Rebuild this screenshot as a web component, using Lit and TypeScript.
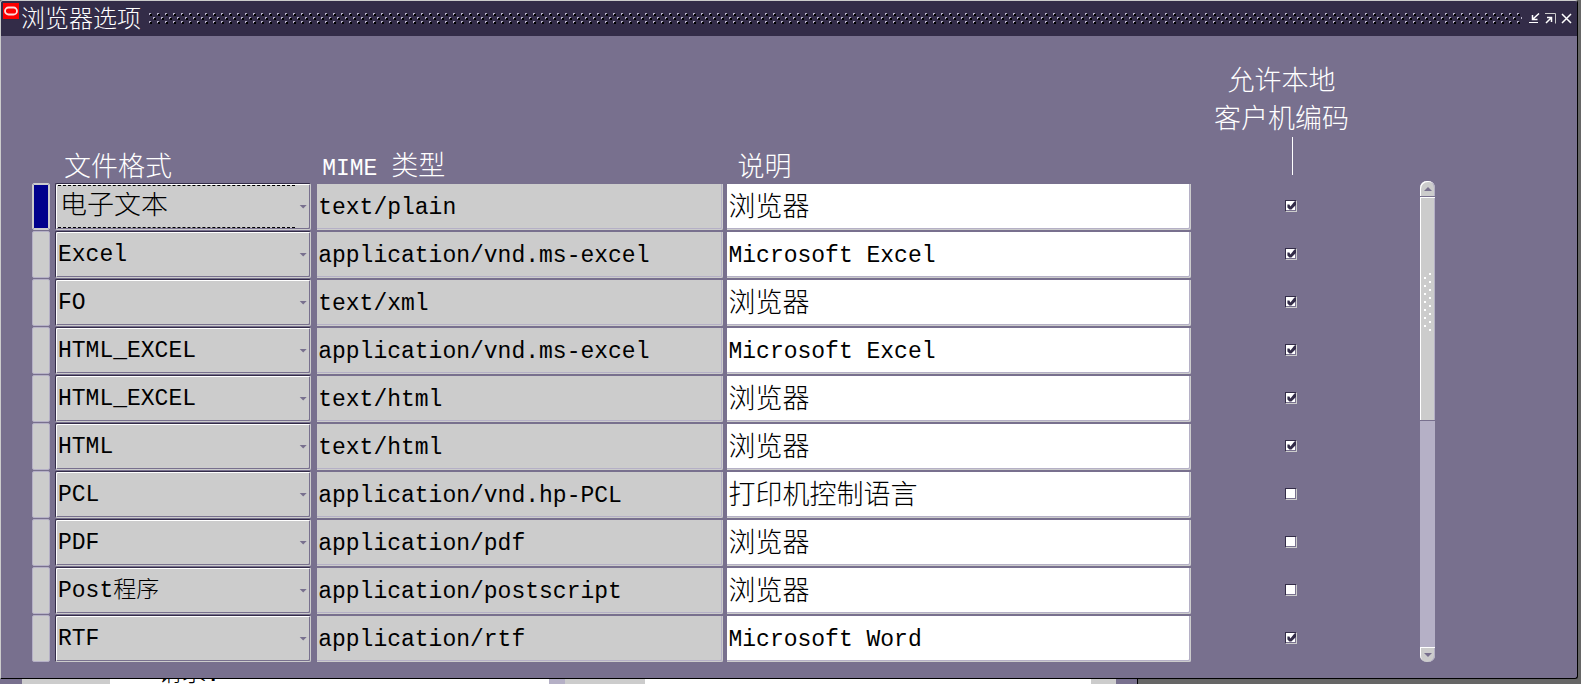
import { LitElement, html, css, svg } from "lit";
import { customElement, state } from "lit/decorators.js";
import { classMap } from "lit/directives/class-map.js";

interface Row {
  format: string;
  mime: string;
  note: string;
  local: boolean;
}

const hasHan = (s: string) => /^[\u4e00-\u9fff]/.test(s);

@customElement("app-root")
export class AppRoot extends LitElement {
  @state() private current = 0;
  @state() private rows: Row[] = [
    { format: "电子文本", mime: "text/plain", note: "浏览器", local: true },
    { format: "Excel", mime: "application/vnd.ms-excel", note: "Microsoft Excel", local: true },
    { format: "FO", mime: "text/xml", note: "浏览器", local: true },
    { format: "HTML_EXCEL", mime: "application/vnd.ms-excel", note: "Microsoft Excel", local: true },
    { format: "HTML_EXCEL", mime: "text/html", note: "浏览器", local: true },
    { format: "HTML", mime: "text/html", note: "浏览器", local: true },
    { format: "PCL", mime: "application/vnd.hp-PCL", note: "打印机控制语言", local: false },
    { format: "PDF", mime: "application/pdf", note: "浏览器", local: false },
    { format: "Post程序", mime: "application/postscript", note: "浏览器", local: false },
    { format: "RTF", mime: "application/rtf", note: "Microsoft Word", local: true },
  ];

  static styles = css`
    :host {
      display: flex;
      flex-direction: column;
      min-height: 100vh;
      background: #666;
      font-family: "Liberation Mono", "Noto Sans CJK SC", monospace;
      font-size: 23px;
      font-weight: 300;
      color: #000;
    }
    * { box-sizing: border-box; }
    button, input, select { font: inherit; color: inherit; margin: 0; padding: 0; border: 0; border-radius: 0; }
    svg { display: block; }

    .window {
      margin-right: 3px;
      background: #78708e;
      border: 1px solid #ccc;
      border-right-color: #000;
      border-bottom-color: #000;
      border-radius: 3px 3px 3px 0;
      overflow: hidden;
    }
    .titlebar {
      display: flex;
      height: 35px;
      padding: 0 5px 0 2px;
      background: #332c48;
      color: #fff;
    }
    .logo { margin-top: 2px; width: 16px; height: 16px; }
    .title { margin: 2px 8px 0 2px; font-size: 24px; line-height: 36px; font-weight: 300; }
    .grip { flex: 1; height: 11px; margin: 12px 7px 0 0; }
    .tools { display: flex; gap: 5px; margin-top: 12px; }
    .tools button { background: none; width: 11px; height: 11px; }

    .body { display: flex; align-items: flex-end; padding: 25px 142px 15px 31px; }
    table {
      flex: 1;
      display: grid;
      grid-template-columns: 23px 262fr 410fr 463fr 229fr;
    }
    thead, tbody, tr { display: contents; }
    td, th { padding: 0; min-width: 0; }
    th { align-self: end; text-align: left; font-weight: 300; color: #fff; line-height: 32px; white-space: nowrap; }
    .han { font-size: 27px; }
    .c-format { padding-left: 9px; }
    .c-mime { padding-left: 5px; }
    .c-note { padding-left: 10px; }
    .c-local {
      display: flex;
      flex-direction: column;
      align-items: center;
      padding: 0 26px 8px 0;
      line-height: 38px;
    }
    .c-local .label { text-align: center; padding: 3px 22px 0 0; margin-bottom: -3px; }
    .c-format, .c-mime, .c-note { line-height: 28px; }
    .stem { width: 1px; height: 38px; background: #fff; }

    td { height: 48px; }
    .rec {
      display: block;
      width: 18px;
      height: 47px;
      background: #ccc;
      border: 1px solid #b5b0c6;
      border-radius: 2px;
      box-shadow: inset 0 0 0 1px #ccc;
    }
    .rec.on { background: #00008c; border-color: #ccc; }
    .pick {
      width: calc(100% - 6px);
      height: 47px;
      border: 1px solid #332c48;
      border-right-color: #ccc;
      border-bottom-color: #ccc;
      border-radius: 2px;
      background: #ccc;
      box-shadow: inset 1px 1px #fff, inset -1px -1px #78708e;
      display: flex;
      align-items: center;
      padding: 0 3px 0 2px;
    }
    .pick select {
      appearance: none;
      flex: 1;
      min-width: 0;
      height: 43px;
      background: none;
      outline: none;
      border-block: 1px dashed transparent;
    }
    .pick.on select { border-color: #000; padding-left: 2px; }
    .arrow { width: 8px; height: 4px; margin-left: 4px; background: #78708e; clip-path: polygon(0 0, 100% 0, 50% 100%); }
    .field {
      display: block;
      height: 46px;
      width: calc(100% - 4px);
      margin-top: 1px;
      padding: 2px 0 0 1px;
      border-right: 1px solid #ccc;
      border-bottom: 1px solid #ccc;
      border-radius: 0 0 2px 0;
      box-shadow: inset -1px -1px #b5b0c6;
      background: #ccc;
      outline: none;
    }
    .field.note { background: #fff; width: 100%; }
    .field.han { padding: 0 0 4px 1px; }
    .cell-local { display: flex; justify-content: center; align-items: center; padding: 0 28px 3px 0; }
    .tick {
      appearance: none;
      width: 12px;
      height: 12px;
      background: #fff;
      border: 1px solid #332c48;
      border-right-color: #ccc;
      border-bottom-color: #ccc;
      box-shadow: inset -1px -1px #78708e;
    }
    .tick:checked::before {
      content: "";
      display: block;
      width: 10px;
      height: 10px;
      background: #332c48;
      clip-path: polygon(8px 1px, 10px 1px, 10px 4px, 5px 9px, 3px 9px, 1px 7px, 1px 4px, 3px 4px, 4px 6px);
    }

    .scroll { display: flex; flex-direction: column; width: 15px; height: 481px; margin-bottom: 1px; background: #b5b0c6; border-radius: 7px; }
    .scroll button { display: grid; place-items: center; flex: none; width: 15px; height: 15px; background: #ccc; box-shadow: inset 1px 1px #fff, inset -1px 0 #b5b0c6; }
    .scroll .up { border-radius: 7px 7px 0 0; }
    .scroll .down { border-radius: 0 0 7px 7px; }
    .thumb {
      display: grid;
      place-items: center;
      height: 225px;
      padding-bottom: 12px;
      background: #ccc;
      border-top: 1px solid #78708e;
      border-bottom: 1px solid #78708e;
      box-shadow: inset 1px 1px #fff, inset -1px 0 #b5b0c6;
    }
    .space { flex: 1; }

    .behind {
      flex: 1 0 0;
      display: grid;
      grid-template-columns: 22fr 88fr 439fr 16fr 80fr 446fr 25fr 22fr 443fr;
      height: 5px;
      overflow: hidden;
    }
    .p { background: #78708e; }
    .g { background: #ccc; }
    .w { background: #fff; }
    .l { background: #b5b0c6; }
    .edge { border-right: 1px solid #000; }
    .peek { display: flex; align-items: flex-end; height: 5px; padding-left: 48px; font-size: 24px; line-height: 18px; overflow: hidden; }
  `;

  private dots(id: string) {
    return svg`<defs><pattern id=${id} width="8" height="8" patternUnits="userSpaceOnUse">
      <path fill="#000" d="M1 1h2v2h-2zM5 5h2v2h-2z"/>
      <path fill="#b5b0c6" d="M0 0h2v1h-1v1h-1zM4 4h2v1h-1v1h-1z"/>
    </pattern></defs><rect width="100%" height="11" fill="url(#${id})"/>`;
  }

  private toggle(i: number) {
    this.rows = this.rows.map((r, k) => (k === i ? { ...r, local: !r.local } : r));
  }

  private row(r: Row, i: number) {
    const on = i === this.current;
    return html`<tr @focusin=${() => (this.current = i)}>
      <td><button class=${classMap({ rec: true, on })} aria-label="记录 ${i + 1}"></button></td>
      <td><div class=${classMap({ pick: true, on })}>
        <select class=${classMap({ han: hasHan(r.format) })} aria-label="文件格式"><option>${r.format}</option></select>
        <span class="arrow"></span>
      </div></td>
      <td><input class="field" readonly aria-label="MIME 类型" .value=${r.mime}></td>
      <td><input class=${classMap({ field: true, note: true, han: hasHan(r.note) })} aria-label="说明" .value=${r.note}></td>
      <td class="cell-local"><input class="tick" type="checkbox" aria-label="允许本地客户机编码" .checked=${r.local} @change=${() => this.toggle(i)}></td>
    </tr>`;
  }

  render() {
    return html`
      <main class="window">
        <header class="titlebar">
          <svg class="logo" viewBox="0 0 16 16"><path fill="#f00" d="M0 0h16v16H0z"/><rect x="2" y="4.500" width="12" height="7" rx="3.500" fill="none" stroke="#fdd" stroke-width="1.800"/></svg>
          <h1 class="title">浏览器选项</h1>
          <svg class="grip">${this.dots("grip")}</svg>
          <div class="tools">
            <button aria-label="最小化"><svg width="11" height="11" fill="none" stroke="#fff"><path d="M10 .5L4 6M3.500 2v4.500h5" stroke-width="1.500"/><path d="M0 9.500h9"/></svg></button>
            <button aria-label="最大化"><svg width="11" height="11" fill="none" stroke="#fff"><path d="M0 .5h10.500v10" stroke="#ccc"/><path d="M1 10L6.500 4.500M2 4.500h4.500v4.500" stroke-width="1.500"/></svg></button>
            <button aria-label="关闭"><svg width="11" height="11" fill="none" stroke="#fff"><path d="M1 1l9 9M10 1l-9 9" stroke-width="1.500"/></svg></button>
          </div>
        </header>
        <section class="body">
          <table>
            <thead><tr>
              <th></th>
              <th class="c-format han">文件格式</th>
              <th class="c-mime">MIME <span class="han">类型</span></th>
              <th class="c-note han">说明</th>
              <th class="c-local han"><span class="label">允许本地<br>客户机编码</span><span class="stem"></span></th>
            </tr></thead>
            <tbody>${this.rows.map((r, i) => this.row(r, i))}</tbody>
          </table>
          <div class="scroll">
            <button class="up" aria-label="向上"><svg width="8" height="4"><path fill="#78708e" d="M0 4L4 0l4 4z"/></svg></button>
            <div class="thumb"><svg width="8" height="59" fill="#fff">${Array.from({ length: 15 }, (_, k) => svg`<rect x=${k % 2 ? 0 : 5} y=${k * 4} width="2" height="2"/>`)}</svg></div>
            <div class="space"></div>
            <button class="down" aria-label="向下"><svg width="8" height="4"><path fill="#78708e" d="M0 0h8L4 4z"/></svg></button>
          </div>
        </section>
      </main>
      <div class="behind">
        <i class="p"></i><i class="g"></i><span class="w peek">请求:</span><i class="l"></i><i class="g"></i><i class="w"></i><i class="g"></i><i class="p edge"></i><i></i>
      </div>
    `;
  }
}
